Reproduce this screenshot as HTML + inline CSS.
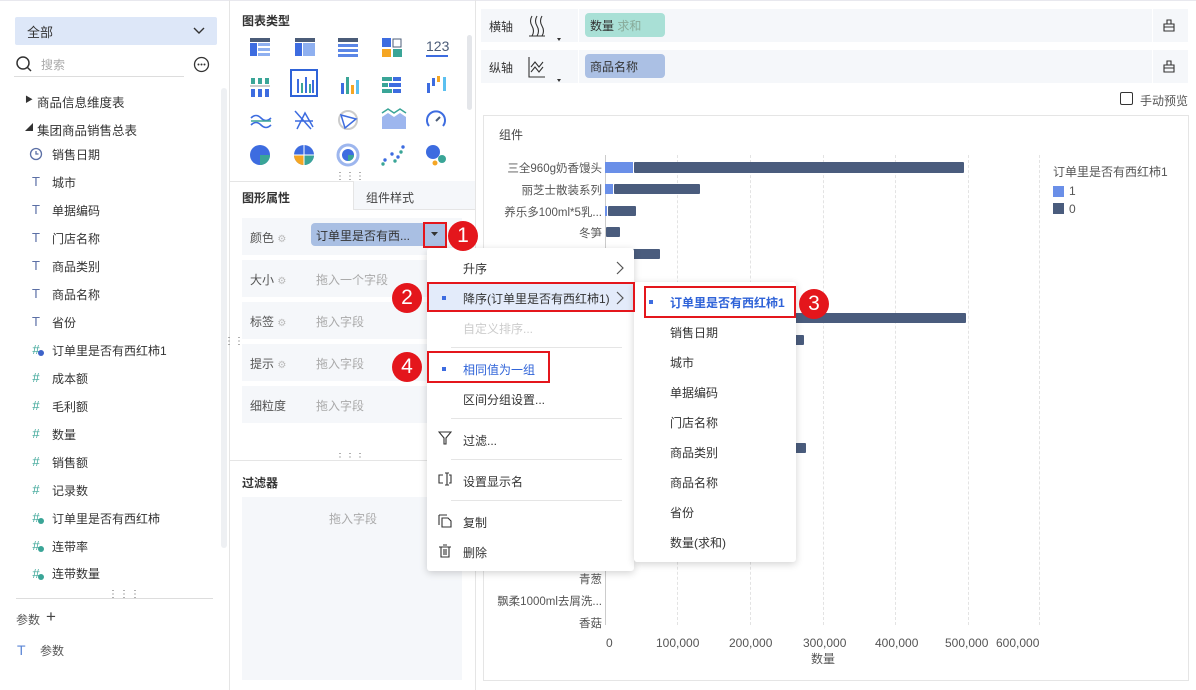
<!DOCTYPE html>
<html><head><meta charset="utf-8"><style>
*{margin:0;padding:0;box-sizing:border-box}
body{width:1196px;height:690px;overflow:hidden;background:#fff;font-family:"Liberation Sans","Noto Sans CJK SC",sans-serif;font-size:12px;color:#333;position:relative}
.a{position:absolute}
.t{position:absolute;white-space:nowrap}
.ic{position:absolute;width:14px;text-align:center;font-size:13px}
.row{position:absolute;left:242px;width:220px;height:37px;background:#f5f7fa}
.row .l{position:absolute;left:8px;top:11px;color:#555}
.row .p{position:absolute;left:74px;top:11px;color:#aaa}
.mi{position:absolute;left:36px;white-space:nowrap;color:#333}
.si{position:absolute;left:36px;white-space:nowrap;color:#333}
.dot{position:absolute;width:4px;height:4px;background:#3d6ce0}
.num{position:absolute;width:30px;height:30px;border-radius:50%;background:#e4161c;color:#fff;font-size:21px;line-height:30px;text-align:center;font-family:"Liberation Sans",sans-serif}
.redb{position:absolute;border:2px solid #e4161c}
.sep{position:absolute;left:24px;right:12px;height:1px;background:#e5e5e5}
.gl{position:absolute;top:155px;height:470px;border-left:1px dashed #e3e3e3}
.bar{position:absolute;height:10px;background:#4a5c7d;border-radius:1px}
.yl{position:absolute;right:594px;font-size:11.5px;color:#555;white-space:nowrap}
</style></head><body>
<div class="a" style="left:0;top:0;width:1196px;height:1px;background:#e8e8ee"></div>
<!-- LEFT -->
<div class="a" style="left:15px;top:17px;width:202px;height:28px;background:#dde7f8;border-radius:2px"></div>
<div class="t" style="left:27px;top:22px;font-size:13px">全部</div>
<svg class="a" style="left:192px;top:26px" width="14" height="10"><path d="M2 2 L7 7 L12 2" stroke="#333" stroke-width="1.4" fill="none"/></svg>
<svg class="a" style="left:15px;top:55px" width="18" height="18"><circle cx="8" cy="8" r="6" stroke="#333" stroke-width="1.5" fill="none"/><path d="M12.5 12.5 L16 16" stroke="#333" stroke-width="1.5"/></svg>
<div class="t" style="left:41px;top:56px;color:#aaa">搜索</div>
<div class="a" style="left:14px;top:76px;width:170px;height:1px;background:#ddd"></div>
<svg class="a" style="left:193px;top:56px" width="17" height="17"><circle cx="8.5" cy="8.5" r="7" stroke="#333" stroke-width="1.3" fill="none"/><circle cx="5.5" cy="8.5" r="1" fill="#333"/><circle cx="8.5" cy="8.5" r="1" fill="#333"/><circle cx="11.5" cy="8.5" r="1" fill="#333"/></svg>
<div class="a" style="left:221px;top:88px;width:6px;height:460px;background:#eef0f3;border-radius:3px"></div>
<div class="t" style="left:25px;top:94px;font-size:8px">▶</div>
<div class="t" style="left:37px;top:92px;font-size:12.5px">商品信息维度表</div>
<div class="t" style="left:25px;top:122px;font-size:8px">◢</div>
<div class="t" style="left:37px;top:120px;font-size:12.5px">集团商品销售总表</div>
<svg class="a" style="left:29px;top:147px" width="14" height="14"><circle cx="7" cy="7" r="5.5" stroke="#5b6fa5" stroke-width="1.3" fill="none"/><path d="M7 4 V7 H9.5" stroke="#5b6fa5" stroke-width="1.3" fill="none"/></svg>
<div class="t" style="left:52px;top:146px">销售日期</div>
<div class="ic" style="left:29px;top:174px;color:#5b6fa5">T</div><div class="t" style="left:52px;top:174px">城市</div>
<div class="ic" style="left:29px;top:202px;color:#5b6fa5">T</div><div class="t" style="left:52px;top:202px">单据编码</div>
<div class="ic" style="left:29px;top:230px;color:#5b6fa5">T</div><div class="t" style="left:52px;top:230px">门店名称</div>
<div class="ic" style="left:29px;top:258px;color:#5b6fa5">T</div><div class="t" style="left:52px;top:258px">商品类别</div>
<div class="ic" style="left:29px;top:286px;color:#5b6fa5">T</div><div class="t" style="left:52px;top:286px">商品名称</div>
<div class="ic" style="left:29px;top:314px;color:#5b6fa5">T</div><div class="t" style="left:52px;top:314px">省份</div>
<div class="ic" style="left:29px;top:342px;color:#3aa597">#</div><div class="a" style="left:38px;top:350px;width:6px;height:6px;border-radius:50%;background:#3d63c9"></div><div class="t" style="left:52px;top:342px">订单里是否有西红柿1</div>
<div class="ic" style="left:29px;top:370px;color:#3aa597">#</div><div class="t" style="left:52px;top:370px">成本额</div>
<div class="ic" style="left:29px;top:398px;color:#3aa597">#</div><div class="t" style="left:52px;top:398px">毛利额</div>
<div class="ic" style="left:29px;top:426px;color:#3aa597">#</div><div class="t" style="left:52px;top:426px">数量</div>
<div class="ic" style="left:29px;top:454px;color:#3aa597">#</div><div class="t" style="left:52px;top:454px">销售额</div>
<div class="ic" style="left:29px;top:482px;color:#3aa597">#</div><div class="t" style="left:52px;top:482px">记录数</div>
<div class="ic" style="left:29px;top:510px;color:#3aa597">#</div><div class="a" style="left:38px;top:518px;width:6px;height:6px;border-radius:50%;background:#3aa597"></div><div class="t" style="left:52px;top:510px">订单里是否有西红柿</div>
<div class="ic" style="left:29px;top:538px;color:#3aa597">#</div><div class="a" style="left:38px;top:546px;width:6px;height:6px;border-radius:50%;background:#3aa597"></div><div class="t" style="left:52px;top:538px">连带率</div>
<div class="ic" style="left:29px;top:566px;color:#3aa597">#</div><div class="a" style="left:38px;top:574px;width:6px;height:6px;border-radius:50%;background:#3aa597"></div><div class="t" style="left:52px;top:565px">连带数量</div>
<div class="a" style="left:16px;top:598px;width:197px;height:1px;background:#ddd"></div>
<div class="t" style="left:108px;top:589px;color:#666;font-size:10px;letter-spacing:1px">⋮⋮⋮</div>
<div class="t" style="left:16px;top:611px;color:#555">参数</div>
<div class="t" style="left:46px;top:607px;font-size:17px;color:#444">+</div>
<div class="t" style="left:17px;top:642px;color:#5b86d6;font-size:14px">T</div>
<div class="t" style="left:40px;top:642px;color:#555">参数</div>
<div class="a" style="left:229px;top:0;width:1px;height:690px;background:#e5e5e5"></div>
<div class="t" style="left:224px;top:336px;color:#666;font-size:10px">⋮⋮</div>
<!-- MIDDLE -->
<div class="t" style="left:242px;top:12px;font-weight:bold;font-size:12px">图表类型</div>
<div class="a" style="left:467px;top:35px;width:5px;height:75px;background:#e4e6ea;border-radius:3px"></div>
<svg class="a" style="left:245px;top:33px" width="215" height="135">
<g transform="translate(5,5)"><rect width="20" height="4" fill="#4b5c78"/><rect y="5" width="7" height="13" fill="#3d6ce0"/><rect x="8" y="5" width="12" height="3" fill="#8fb0f0"/><rect x="8" y="10" width="12" height="3" fill="#8fb0f0"/><rect x="8" y="15" width="12" height="3" fill="#8fb0f0"/></g>
<g transform="translate(50,5)"><rect width="20" height="4" fill="#4b5c78"/><rect y="5" width="7" height="13" fill="#3d6ce0"/><rect x="8" y="5" width="12" height="13" fill="#8fb0f0"/></g>
<g transform="translate(93,5)"><rect width="20" height="4" fill="#4b5c78"/><rect y="6" width="20" height="3" fill="#5b86e6"/><rect y="11" width="20" height="3" fill="#5b86e6"/><rect y="16" width="20" height="3" fill="#5b86e6"/></g>
<g transform="translate(137,5)"><rect width="9" height="9" fill="#3d6ce0"/><rect x="11" y="1" width="8" height="8" fill="none" stroke="#4b5c78"/><rect y="11" width="9" height="8" fill="#f5a623"/><rect x="11" y="11" width="9" height="8" fill="#3aa597"/></g>
<text x="181" y="18" font-size="14" fill="#4b5c78" font-family="Liberation Sans">123</text><rect x="181" y="22" width="22" height="2" fill="#3d6ce0"/>
<g transform="translate(5,45)"><rect x="1" width="4" height="6" fill="#3aa597"/><rect x="8" width="4" height="6" fill="#3aa597"/><rect x="15" width="4" height="6" fill="#3aa597"/><rect y="7" width="20" height="2" fill="#ccc"/><rect x="1" y="11" width="4" height="8" fill="#3d6ce0"/><rect x="8" y="11" width="4" height="8" fill="#3d6ce0"/><rect x="15" y="11" width="4" height="8" fill="#3d6ce0"/></g>
<rect x="46" y="37" width="26" height="26" fill="none" stroke="#2f63d8" stroke-width="2"/>
<g transform="translate(51,42)"><rect x="1" y="4" width="2" height="14" fill="#3d6ce0"/><rect x="5" y="8" width="2" height="10" fill="#3aa597"/><rect x="9" y="2" width="2" height="16" fill="#3d6ce0"/><rect x="13" y="9" width="2" height="9" fill="#3aa597"/><rect x="16" y="5" width="2" height="13" fill="#3d6ce0"/></g>
<g transform="translate(95,42)"><rect x="1" y="8" width="3" height="11" fill="#3d6ce0"/><rect x="6" y="2" width="3" height="17" fill="#3aa597"/><rect x="11" y="10" width="3" height="9" fill="#f5a623"/><rect x="16" y="5" width="3" height="14" fill="#5bc0f0"/></g>
<g transform="translate(137,44)"><rect width="10" height="4" fill="#3aa597"/><rect x="11" width="8" height="4" fill="#3d6ce0"/><rect y="6" width="6" height="4" fill="#3aa597"/><rect x="7" y="6" width="12" height="4" fill="#3d6ce0"/><rect y="12" width="10" height="4" fill="#3aa597"/><rect x="11" y="12" width="8" height="4" fill="#3d6ce0"/></g>
<g transform="translate(182,42)"><rect y="8" width="3" height="10" fill="#3d6ce0"/><rect x="5" y="3" width="3" height="8" fill="#3d6ce0"/><rect x="10" y="1" width="3" height="6" fill="#f5a623"/><rect x="16" y="2" width="3" height="14" fill="#5bc0f0"/></g>
<path d="M6 85 q5 -5 10 0 t10 0 M6 92 q5 -5 10 0 t10 0" stroke="#3d6ce0" stroke-width="1.6" fill="none"/><path d="M6 88 h20" stroke="#3aa597" stroke-width="1.4"/>
<path d="M50 78 L66 96 M52 96 L60 80 L68 94 M50 88 h18" stroke="#3d6ce0" stroke-width="1.5" fill="none"/>
<circle cx="103" cy="87" r="9" fill="none" stroke="#ccc" stroke-width="2"/><path d="M96 82 L111 86 L100 95 Z" fill="none" stroke="#3d6ce0" stroke-width="1.5"/>
<path d="M137 84 l6 -4 6 4 6 -4 6 4 v12 h-24z" fill="#9db6ee"/><path d="M137 80 l6 -4 6 4 6 -4 6 4" stroke="#3aa597" fill="none" stroke-width="1.5"/>
<path d="M184 93 a9 9 0 1 1 14 0" stroke="#3d6ce0" stroke-width="2" fill="none"/><path d="M191 88 l4 -4" stroke="#4b5c78" stroke-width="2"/>
<circle cx="15" cy="122" r="10" fill="#3d6ce0"/><path d="M15 122 h10 a10 10 0 0 1 -10 10z" fill="#3aa597"/>
<circle cx="59" cy="122" r="10" fill="#3d6ce0"/><path d="M59 122 h10 a10 10 0 0 1 -10 10z" fill="#3aa597"/><path d="M59 122 v10 a10 10 0 0 1 -10 -10z" fill="#f5a623"/><path d="M59 112 v20 M49 122 h20" stroke="#fff"/>
<circle cx="103" cy="122" r="10" fill="none" stroke="#9db6ee" stroke-width="3"/><circle cx="103" cy="122" r="6" fill="#3d6ce0"/><path d="M103 122 h6 a6 6 0 0 1 -6 6z" fill="#3aa597"/>
<g fill="#3d6ce0"><circle cx="140" cy="127" r="1.7"/><circle cx="147" cy="121" r="1.7"/><circle cx="153" cy="124" r="1.7"/><circle cx="158" cy="114" r="1.7"/></g><g fill="#3aa597"><circle cx="138" cy="131" r="1.7"/><circle cx="150" cy="128" r="1.7"/><circle cx="156" cy="119" r="1.7"/></g>
<circle cx="188" cy="119" r="7" fill="#3d6ce0"/><circle cx="197" cy="126" r="4" fill="#3aa597"/><circle cx="190" cy="130" r="2.5" fill="#f5a623"/>
</svg>
<div class="t" style="left:335px;top:171px;color:#666;font-size:10px">⋮⋮⋮</div>
<div class="a" style="left:230px;top:181px;width:245px;height:1px;background:#e5e5e5"></div>
<div class="a" style="left:353px;top:181px;width:122px;height:29px;background:#f5f7fa;border-left:1px solid #e5e5e5;border-bottom:1px solid #e5e5e5"></div>
<div class="t" style="left:242px;top:189px;font-weight:bold">图形属性</div>
<div class="t" style="left:366px;top:189px;color:#444">组件样式</div>
<div class="row" style="top:218px"><span class="l">颜色 <span style="color:#bbb;font-size:10px">⚙</span></span></div>
<div class="a" style="left:311px;top:223px;width:135px;height:23px;background:#a9bfe3;border-radius:4px 0 0 4px"></div>
<div class="t" style="left:316px;top:227px;color:#333">订单里是否有西...</div>
<svg class="a" style="left:431px;top:232px" width="7" height="5"><path d="M0 0 h7 l-3.5 4z" fill="#333"/></svg>
<div class="redb" style="left:423px;top:222px;width:24px;height:26px"></div>
<div class="row" style="top:260px"><span class="l">大小 <span style="color:#bbb;font-size:10px">⚙</span></span><span class="p">拖入一个字段</span></div>
<div class="row" style="top:302px"><span class="l">标签 <span style="color:#bbb;font-size:10px">⚙</span></span><span class="p">拖入字段</span></div>
<div class="row" style="top:344px"><span class="l">提示 <span style="color:#bbb;font-size:10px">⚙</span></span><span class="p">拖入字段</span></div>
<div class="row" style="top:386px"><span class="l">细粒度</span><span class="p">拖入字段</span></div>
<div class="t" style="left:335px;top:452px;color:#666;font-size:10px">⋮⋮⋮</div>
<div class="a" style="left:230px;top:460px;width:245px;height:1px;background:#e5e5e5"></div>
<div class="t" style="left:242px;top:474px;font-weight:bold">过滤器</div>
<div class="a" style="left:242px;top:497px;width:220px;height:183px;background:#f5f7fa"></div>
<div class="t" style="left:329px;top:510px;color:#aaa">拖入字段</div>
<div class="a" style="left:475px;top:0;width:1px;height:690px;background:#e5e5e5"></div>
<!-- RIGHT -->
<div class="a" style="left:481px;top:9px;width:707px;height:33px;background:#f5f7fa"></div>
<div class="a" style="left:481px;top:50px;width:707px;height:33px;background:#f5f7fa"></div>
<div class="a" style="left:578px;top:9px;width:1px;height:33px;background:#fff"></div>
<div class="a" style="left:578px;top:50px;width:1px;height:33px;background:#fff"></div>
<div class="a" style="left:1152px;top:9px;width:1px;height:74px;background:#fff"></div>
<div class="t" style="left:489px;top:18px">横轴</div>
<div class="t" style="left:489px;top:59px">纵轴</div>
<svg class="a" style="left:526px;top:14px" width="40" height="30"><path d="M3 22 h16 M6 2 q-3 5 0 10 q3 5 0 10 M11 2 q-3 5 0 10 q3 5 0 10 M16 2 q-3 5 0 10 q3 5 0 10" stroke="#333" fill="none" stroke-width="1.1"/><path d="M31 24 l2 3 2 -3z" fill="#333"/></svg>
<svg class="a" style="left:526px;top:55px" width="40" height="30"><path d="M3 2 v20 h16 M5 12 l4 -5 4 5 4 -5 M5 17 l4 -5 4 5 4 -5" stroke="#333" fill="none" stroke-width="1.1"/><path d="M31 24 l2 3 2 -3z" fill="#333"/></svg>
<div class="a" style="left:585px;top:13px;width:80px;height:24px;background:#a9e0d6;border-radius:4px"></div>
<div class="t" style="left:590px;top:17px">数量 <span style="color:#8a9">求和</span></div>
<div class="a" style="left:585px;top:54px;width:80px;height:24px;background:#abc0e4;border-radius:4px"></div>
<div class="t" style="left:590px;top:58px">商品名称</div>
<svg class="a" style="left:1162px;top:18px" width="14" height="14"><path d="M2 6 h10 v7 h-10z M5 6 v-4 h4 v4 M2 9 h10" stroke="#333" fill="none" stroke-width="1.1"/></svg>
<svg class="a" style="left:1162px;top:59px" width="14" height="14"><path d="M2 6 h10 v7 h-10z M5 6 v-4 h4 v4 M2 9 h10" stroke="#333" fill="none" stroke-width="1.1"/></svg>
<div class="a" style="left:1120px;top:92px;width:13px;height:13px;border:1px solid #333;border-radius:2px"></div>
<div class="t" style="left:1140px;top:92px;color:#555">手动预览</div>
<div class="a" style="left:483px;top:115px;width:706px;height:566px;border:1px solid #e5e5e5"></div>
<div class="t" style="left:499px;top:126px;color:#444">组件</div>
<!-- chart -->
<div class="a" style="left:605px;top:155px;height:470px;border-left:1px solid #ccc"></div>
<div class="gl" style="left:677px"></div><div class="gl" style="left:750px"></div><div class="gl" style="left:823px"></div><div class="gl" style="left:895px"></div><div class="gl" style="left:968px"></div><div class="gl" style="left:1039px"></div>
<div class="a" style="left:605px;top:162px;width:28px;height:11px;background:#6a8fe8"></div>
<div class="bar" style="left:634px;top:162px;width:330px;height:11px"></div>
<div class="a" style="left:605px;top:184px;width:8px;height:10px;background:#6a8fe8"></div>
<div class="bar" style="left:614px;top:184px;width:86px"></div>
<div class="a" style="left:605px;top:206px;width:2px;height:10px;background:#6a8fe8"></div>
<div class="bar" style="left:608px;top:206px;width:28px"></div>
<div class="bar" style="left:606px;top:227px;width:14px"></div>
<div class="bar" style="left:606px;top:249px;width:54px"></div>
<div class="bar" style="left:606px;top:313px;width:360px"></div>
<div class="bar" style="left:606px;top:335px;width:198px"></div>
<div class="bar" style="left:606px;top:443px;width:200px"></div>
<div class="yl" style="top:160px">三全960g奶香馒头</div>
<div class="yl" style="top:182px">丽芝士散装系列</div>
<div class="yl" style="top:204px">养乐多100ml*5乳...</div>
<div class="yl" style="top:225px">冬笋</div>
<div class="yl" style="top:571px">青葱</div>
<div class="yl" style="top:593px">飘柔1000ml去屑洗...</div>
<div class="yl" style="top:615px">香菇</div>
<div class="t" style="left:606px;top:636px;color:#555">0</div>
<div class="t" style="left:656px;top:636px;color:#555">100,000</div>
<div class="t" style="left:729px;top:636px;color:#555">200,000</div>
<div class="t" style="left:803px;top:636px;color:#555">300,000</div>
<div class="t" style="left:875px;top:636px;color:#555">400,000</div>
<div class="t" style="left:945px;top:636px;color:#555">500,000</div>
<div class="t" style="left:996px;top:636px;color:#555">600,000</div>
<div class="t" style="left:811px;top:650px;color:#555">数量</div>
<div class="t" style="left:1053px;top:163px;color:#555">订单里是否有西红柿1</div>
<div class="a" style="left:1053px;top:186px;width:11px;height:11px;background:#6a8fe8"></div><div class="t" style="left:1069px;top:184px;color:#555">1</div>
<div class="a" style="left:1053px;top:203px;width:11px;height:11px;background:#4a5c7d"></div><div class="t" style="left:1069px;top:202px;color:#555">0</div>
<!-- MENU -->
<div class="a" style="left:427px;top:248px;width:207px;height:323px;background:#fff;box-shadow:0 2px 8px rgba(0,0,0,.18);border-radius:3px">
<div class="mi" style="top:12px">升序</div>
<svg class="a" style="left:188px;top:13px" width="10" height="14"><path d="M2 1 L8 7 L2 13" stroke="#555" fill="none" stroke-width="1.2"/></svg>
<div class="a" style="left:0;top:34px;width:207px;height:30px;background:#e3ebfa"></div>
<div class="dot" style="left:15px;top:48px"></div>
<div class="mi" style="top:42px">降序(订单里是否有西红柿1)</div>
<svg class="a" style="left:188px;top:43px" width="10" height="14"><path d="M2 1 L8 7 L2 13" stroke="#555" fill="none" stroke-width="1.2"/></svg>
<div class="mi" style="top:72px;color:#ccc">自定义排序...</div>
<div class="sep" style="top:99px"></div>
<div class="dot" style="left:15px;top:119px"></div>
<div class="mi" style="top:113px;color:#2f63d8">相同值为一组</div>
<div class="mi" style="top:143px">区间分组设置...</div>
<div class="sep" style="top:170px"></div>
<svg class="a" style="left:11px;top:183px" width="14" height="14"><path d="M1 1 h12 l-5 6 v6 h-2 v-6z" stroke="#333" fill="none" stroke-width="1.1"/></svg>
<div class="mi" style="top:184px">过滤...</div>
<div class="sep" style="top:211px"></div>
<svg class="a" style="left:10px;top:224px" width="16" height="14"><path d="M6 3 h-4 v8 h4 M10 1 v12 M8 1 h4 M8 13 h4 M12 3 h2 v8 h-2" stroke="#333" fill="none" stroke-width="1.1"/></svg>
<div class="mi" style="top:225px">设置显示名</div>
<div class="sep" style="top:252px"></div>
<svg class="a" style="left:11px;top:266px" width="14" height="14"><path d="M1 1 h8 M1 1 v10 M4 4 h6 l3 3 v6 h-9z" stroke="#333" fill="none" stroke-width="1.1"/></svg>
<div class="mi" style="top:266px">复制</div>
<svg class="a" style="left:11px;top:296px" width="14" height="14"><path d="M1 3 h12 M3 3 v10 h8 v-10 M5 1 h4 M6 5 v6 M8 5 v6" stroke="#333" fill="none" stroke-width="1.1"/></svg>
<div class="mi" style="top:296px">删除</div>
</div>
<div class="a" style="left:634px;top:282px;width:162px;height:280px;background:#fff;box-shadow:0 2px 8px rgba(0,0,0,.18);border-radius:3px">
<div class="dot" style="left:15px;top:18px"></div>
<div class="si" style="top:12px;color:#2f63d8;font-weight:bold">订单里是否有西红柿1</div>
<div class="si" style="top:42px">销售日期</div>
<div class="si" style="top:72px">城市</div>
<div class="si" style="top:102px">单据编码</div>
<div class="si" style="top:132px">门店名称</div>
<div class="si" style="top:162px">商品类别</div>
<div class="si" style="top:192px">商品名称</div>
<div class="si" style="top:222px">省份</div>
<div class="si" style="top:252px">数量(求和)</div>
</div>
<div class="redb" style="left:427px;top:282px;width:208px;height:30px"></div>
<div class="redb" style="left:427px;top:351px;width:123px;height:32px"></div>
<div class="redb" style="left:644px;top:286px;width:152px;height:32px"></div>
<div class="num" style="left:448px;top:221px">1</div>
<div class="num" style="left:392px;top:283px">2</div>
<div class="num" style="left:799px;top:289px">3</div>
<div class="num" style="left:392px;top:352px">4</div>
</body></html>
